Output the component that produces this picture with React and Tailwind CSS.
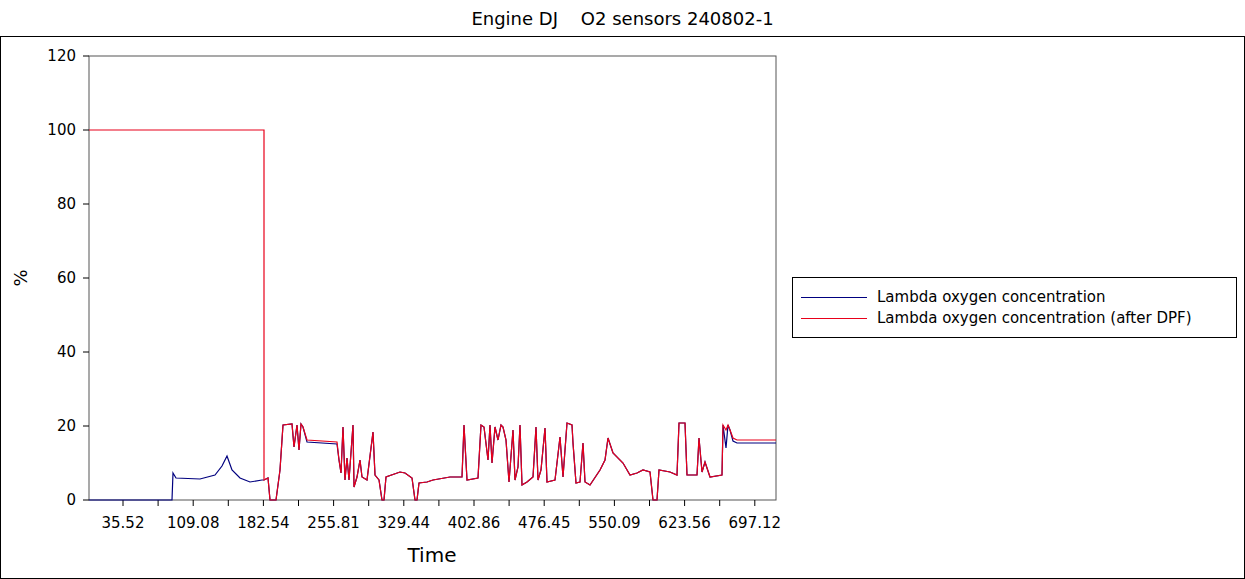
const after = [[264,480],[268,478],[270,500],[276,500],[280,470],[283,425],[292,424],[294,447],[297,425],[299,450],[301,424],[303,427],[307,440],[337,442],[339,460],[341,473],[343,427],[345,480],[347,458],[349,480],[353,425],[354,487],[357,477],[360,460],[362,477],[367,480],[373,432],[375,475],[379,480],[382,500],[384,500],[386,477],[400,472],[405,473],[412,478],[415,500],[417,500],[419,483],[427,482],[433,480],[450,477],[462,477],[464,425],[467,480],[478,478],[481,425],[484,427],[488,460],[490,425],[492,463],[495,427],[498,440],[501,425],[503,427],[506,440],[509,482],[513,430],[515,480],[518,467],[520,425],[522,485],[527,482],[533,477],[536,427],[538,480],[541,470],[545,428],[547,482],[555,480],[560,437],[563,477],[567,423],[572,425],[573,443],[576,483],[580,482],[583,443],[585,482],[590,485],[600,470],[605,460],[608,438],[613,453],[623,463],[630,475],[637,473],[643,470],[650,472],[653,500],[657,500],[659,470],[670,472],[677,475],[679,423],[685,423],[687,475],[697,475],[699,438],[702,472],[705,462],[710,477],[722,475],[723,425],[726,430],[728,425],[730,430],[733,438],[737,440],[776,440]];
const blueBefore = [[89,500],[172,500],[173,473],[176,478],[200,479],[215,475],[222,466],[227,456],[232,470],[240,478],[250,482],[262,480]];
const blueAfter = after.map(([x,y]) => [x, (y===440||y===442)&&x>300&&x<340 ? y+2 : (x>=733 ? y+3 : y)]);
blueAfter.splice(blueAfter.findIndex(p=>p[0]===726),1,[726,448]);
const s = a => a.map(p=>p.join(",")).join(" ");
const red = [[89,130],[264,130],[264,480],...after];
const yt = [120,100,80,60,40,20,0];
const xl = ["35.52","109.08","182.54","255.81","329.44","402.86","476.45","550.09","623.56","697.12"];
export default function App(){
  return (
    <div className="w-[1245px] h-[579px] bg-white flex flex-col" style={{fontFamily:'"DejaVu Sans", sans-serif'}}>
      <div className="h-[36px] flex items-center justify-center text-[18px] text-black whitespace-pre">Engine DJ    O2 sensors 240802-1</div>
      <div className="flex-1 border border-black flex">
        <svg width="790" height="541" className="shrink-0" fontFamily="DejaVu Sans, sans-serif">
          <g transform="translate(-1,-37)">
            <rect x="89" y="56" width="687" height="444" fill="white" stroke="#555" strokeWidth="1"/>
            {yt.map((v,i)=>(<g key={v}>
              <line x1="83" x2="89" y1={56+i*74} y2={56+i*74} stroke="black"/>
              <text x="76" y={61+i*74} textAnchor="end" fontSize="15">{v}</text></g>))}
            {Array.from({length:20}).map((_,i)=>{const x=123+i*35.1; return x<778 && <line key={i} x1={x} x2={x} y1="500" y2="506" stroke="black"/>;})}
            {xl.map((l,i)=>(<text key={l} x={123+i*70.2} y="528" textAnchor="middle" fontSize="15">{l}</text>))}
            <text x="432" y="562" textAnchor="middle" fontSize="20">Time</text>
            <text transform="translate(27,278) rotate(-90)" textAnchor="middle" fontSize="18">%</text>
            <polyline points={s([...blueBefore,...blueAfter])} fill="none" stroke="#00007f" strokeWidth="1.2"/>
            <polyline points={s(red)} fill="none" stroke="#e8001a" strokeWidth="1.2"/>
          </g>
        </svg>
        <div className="flex items-center">
          <div className="w-[445px] h-[61px] border border-black ml-[1px] px-[8px] flex flex-col justify-center text-[15px] leading-[21px]">
            <div className="flex items-center gap-[10px]"><span className="w-[66px] h-px bg-[#00007f]"/>Lambda oxygen concentration</div>
            <div className="flex items-center gap-[10px]"><span className="w-[66px] h-px bg-[#e8001a]"/>Lambda oxygen concentration (after DPF)</div>
          </div>
        </div>
      </div>
    </div>
  );
}
